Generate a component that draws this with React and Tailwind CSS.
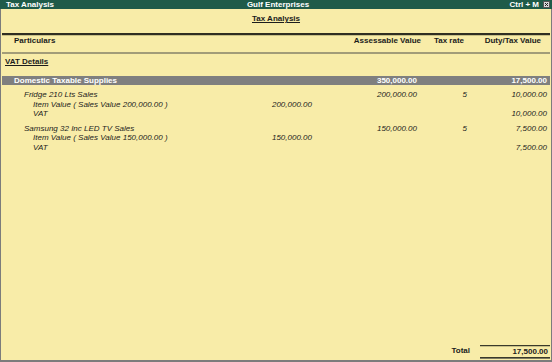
const rows = [
  {
    name: "Fridge 210 Lts Sales",
    assessable: "200,000.00",
    rate: "5",
    duty: "10,000.00",
    item: "Item Value ( Sales Value 200,000.00 )",
    itemValue: "200,000.00",
    vat: "10,000.00",
  },
  {
    name: "Samsung 32 Inc LED TV Sales",
    assessable: "150,000.00",
    rate: "5",
    duty: "7,500.00",
    item: "Item Value ( Sales Value 150,000.00 )",
    itemValue: "150,000.00",
    vat: "7,500.00",
  },
];

const Row = ({ label, mid, assessable, rate, duty, indent }) => (
  <div className="flex h-[9.5px] leading-[9.5px] pr-[4px] italic">
    <div className={`flex-1 flex justify-between ${indent}`}>
      <span>{label}</span>
      <span>{mid}</span>
    </div>
    <div className="w-[105px] text-right">{assessable}</div>
    <div className="w-[50px] text-right">{rate}</div>
    <div className="w-[80px] text-right">{duty}</div>
  </div>
);

export default function App() {
  return (
    <div className="w-[552px] h-[362px] flex flex-col bg-[#f8eca8] font-['Liberation_Sans',Arial,sans-serif] text-[8px] text-[#1c1c1c]">
      {/* title bar */}
      <div className="h-[9px] flex items-center bg-[#1f5b49] text-white font-bold leading-[9px] pl-[6px] pr-[2px]">
        <div className="flex-1">Tax Analysis</div>
        <div>Gulf Enterprises</div>
        <div className="flex-1 flex justify-end items-center gap-[4px]">
          <span>Ctrl + M</span>
          <svg width="7" height="7" viewBox="0 0 7 7">
            <rect x="0" y="0" width="7" height="7" fill="#d8d8d8" />
            <rect x="0.5" y="0.5" width="6" height="6" fill="none" stroke="#555" strokeWidth="1" />
            <path d="M2 2 L5 5 M5 2 L2 5" stroke="#222" strokeWidth="1" />
          </svg>
        </div>
      </div>

      <div className="flex-1 flex flex-col border-l border-r border-b-2 border-[#7c7c7c]">
        <div className="mt-[5px] leading-[9px] text-center font-bold">
          <span className="underline underline-offset-[1px]">Tax Analysis</span>
        </div>

        <div className="mt-[10px] mx-[1px] border-t-2 border-[#2f2e22]" />
        <div className="mx-[1px] h-px bg-[#c8bf86]" />

        {/* column heads */}
        <div className="flex font-bold leading-[9px] mt-[0px] pr-[10px]">
          <div className="flex-1 pl-[13px]">Particulars</div>
          <div className="w-[80px] text-right">Assessable Value</div>
          <div className="w-[43px] text-right">Tax rate</div>
          <div className="w-[77px] text-right">Duty/Tax Value</div>
        </div>

        <div className="mt-[7px] mx-[1px] h-[2px] bg-[#a29c78]" />

        <div className="mt-[3px] pl-[4px] leading-[9px] font-bold">
          <span className="underline underline-offset-[1px]">VAT Details</span>
        </div>

        {/* group bar */}
        <div className="mt-[10px] mx-[1px] h-[9px] leading-[9px] flex bg-[#7f7f7f] text-white font-bold pr-[3px]">
          <div className="flex-1 pl-[12px]">Domestic Taxable Supplies</div>
          <div className="w-[105px] text-right">350,000.00</div>
          <div className="w-[50px] text-right" />
          <div className="w-[80px] text-right">17,500.00</div>
        </div>

        <div className="mt-[5px] flex flex-col gap-[5px]">
          {rows.map((r) => (
            <div key={r.name}>
              <Row label={r.name} assessable={r.assessable} rate={r.rate} duty={r.duty} indent="pl-[23px]" />
              <Row label={r.item} mid={r.itemValue} indent="pl-[32px]" />
              <Row label="VAT" duty={r.vat} indent="pl-[32px]" />
            </div>
          ))}
        </div>

        <div className="flex-1" />

        {/* total */}
        <div className="flex justify-end items-start pr-[1px] mb-[1px]">
          <div className="font-bold leading-[9px] mt-[1px] mr-[10px]">Total</div>
          <div className="w-[70px] flex flex-col">
            <div className="h-px bg-[#3a3a2a]" />
            <div className="h-px bg-[#c8bf86]" />
            <div className="leading-[9px] text-right pr-[2px] font-bold">17,500.00</div>
            <div className="h-px bg-[#3a3a2a] mt-px" />
            <div className="h-px bg-[#7d7a60]" />
          </div>
        </div>
      </div>
    </div>
  );
}
